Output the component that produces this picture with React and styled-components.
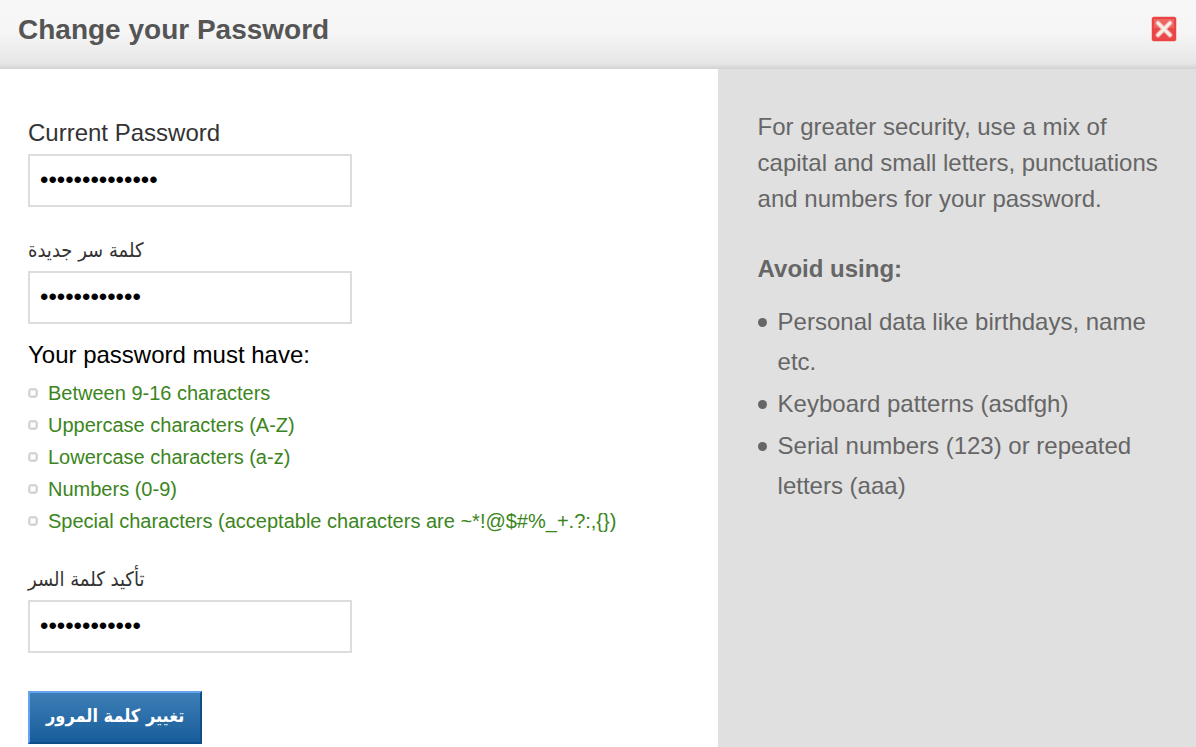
import React, { useState } from "react";
import styled, { createGlobalStyle } from "styled-components";

const RULES = [
    "Between 9-16 characters",
    "Uppercase characters (A-Z)",
    "Lowercase characters (a-z)",
    "Numbers (0-9)",
    "Special characters (acceptable characters are ~*!@$#%_+.?:,{})",
];

const AVOID = [
    "Personal data like birthdays, name etc.",
    "Keyboard patterns (asdfgh)",
    "Serial numbers (123) or repeated letters (aaa)",
];

const App = () => {
    const [formData, setFormData] = useState({
        current: "Password#12345",
        next: "NewPass#2024",
        confirm: "NewPass#2024",
    });

    const handleInputChange = (e) => {
        const { name, value } = e.target;
        setFormData({
            ...formData,
            [name]: value,
        });
    };

    const handleSubmit = (e) => {
        e.preventDefault();
    };

    return (
        <Page>
            <GlobalStyle />
            <Header>
                <Title>Change your Password</Title>
                <CloseButton type="button" aria-label="Close">
                    <CloseIcon />
                </CloseButton>
            </Header>
            <Content>
                <Form onSubmit={handleSubmit}>
                    <Field>
                        <Label htmlFor="current">Current Password</Label>
                        <PasswordInput id="current" name="current" type="password" value={formData.current} onChange={handleInputChange} />
                    </Field>
                    <Field>
                        <Label htmlFor="next" lang="ar" $arabic>كلمة سر جديدة</Label>
                        <PasswordInput id="next" name="next" type="password" value={formData.next} onChange={handleInputChange} />
                    </Field>
                    <RulesTitle>Your password must have:</RulesTitle>
                    <RuleList>
                        {RULES.map((rule) => (
                            <Rule key={rule}>{rule}</Rule>
                        ))}
                    </RuleList>
                    <Field>
                        <Label htmlFor="confirm" lang="ar" $arabic>تأكيد كلمة السر</Label>
                        <PasswordInput id="confirm" name="confirm" type="password" value={formData.confirm} onChange={handleInputChange} />
                    </Field>
                    <SubmitButton type="submit" lang="ar">تغيير كلمة المرور</SubmitButton>
                </Form>
                <Aside>
                    <Tip>
                        For greater security, use a mix of capital and small letters, punctuations and numbers for your password.
                    </Tip>
                    <AvoidTitle>Avoid using:</AvoidTitle>
                    <AvoidList>
                        {AVOID.map((item) => (
                            <AvoidItem key={item}>{item}</AvoidItem>
                        ))}
                    </AvoidList>
                </Aside>
            </Content>
        </Page>
    );
};

export default App;

const CloseIcon = () => (
    <svg width="26" height="26" viewBox="0 0 26 26" aria-hidden="true">
        <rect x="0.5" y="0.5" width="25" height="25" rx="2.5" fill="#f0a09c" />
        <rect x="1" y="1" width="24" height="24" rx="2" fill="#e94343" />
        <rect x="3" y="3" width="20" height="9" fill="#ee6464" />
        <rect x="3" y="12" width="20" height="11" fill="#ea4848" />
        <path d="M7 7 L19 19 M19 7 L7 19" stroke="#f3a5a0" strokeWidth="5" strokeLinecap="round" />
        <path d="M7 7 L19 19 M19 7 L7 19" stroke="#f6efe8" strokeWidth="3" strokeLinecap="round" />
    </svg>
);

const GlobalStyle = createGlobalStyle`
  *, *::before {
    box-sizing: border-box;
  }

  body {
    margin: 0;
    background: #fff;
    font-family: "Liberation Sans", Arial, sans-serif;
  }
`;

const Page = styled.div`
  display: flex;
  flex-direction: column;
  min-height: 100vh;
`;

const Header = styled.header`
  display: flex;
  align-items: flex-start;
  justify-content: space-between;
  padding: 14px 19px 23px 18px;
  background: linear-gradient(#f7f7f7 0, #f6f6f6 45%, #e6e6e6 92%, #d2d2d2 100%);
`;

const Title = styled.h1`
  margin: 0;
  color: #555;
  font-size: 28px;
  line-height: 32px;
`;

const CloseButton = styled.button`
  display: flex;
  margin-top: 2px;
  padding: 0;
  border: 0;
  background: none;
  cursor: pointer;
`;

const Content = styled.main`
  display: grid;
  grid-template-columns: 60% 40%;
  flex: 1;
`;

const Form = styled.form`
  padding: 49px 28px 3px;
`;

const Field = styled.div`
  display: flex;
  flex-direction: column;
  align-items: flex-start;
  gap: 6px;

  & + & {
    margin-top: 28px;
  }
`;

const Label = styled.label`
  color: #333;
  font-family: ${({ $arabic }) => ($arabic ? '"DejaVu Sans Condensed", "DejaVu Sans", sans-serif' : "inherit")};
  font-size: ${({ $arabic }) => ($arabic ? "20px" : "24px")};
  line-height: 30px;
`;

const PasswordInput = styled.input`
  width: 324px;
  max-width: 100%;
  height: 53px;
  padding: 0 10px 2px;
  border: 2px solid #ddd;
  background: #fff;
  color: #000;
  font-family: inherit;
  font-size: 24px;
`;

const RulesTitle = styled.p`
  margin: 16px 0 7px;
  color: #000;
  font-size: 24px;
  line-height: 30px;
`;

const RuleList = styled.ul`
  margin: 0 0 27px;
  padding: 0;
  list-style: none;
`;

const Rule = styled.li`
  display: flex;
  align-items: center;
  gap: 10px;
  color: #3b8520;
  font-size: 20px;
  line-height: 32px;

  &::before {
    content: "";
    flex: none;
    width: 10px;
    height: 10px;
    border: 2px solid #d4d4d4;
    border-radius: 4px;
    background: #fff;
    box-shadow: inset 0 0 1px 1px #e8e8e8;
  }
`;

const SubmitButton = styled.button`
  height: 53px;
  margin-top: 38px;
  padding: 0 16px 4px;
  border: 2px solid;
  border-color: #65a3ee #0f4f88 #0f4f88 #65a3ee;
  background: linear-gradient(#3d7eb6, #185d9b);
  color: #fff;
  font-family: "DejaVu Sans Condensed", "DejaVu Sans", sans-serif;
  font-size: 18px;
  font-weight: bold;
  cursor: pointer;
`;

const Aside = styled.aside`
  padding: 40px 24px 24px 40px;
  background: #e0e0e0;
  color: #666;
  font-size: 24px;
`;

const Tip = styled.p`
  margin: 0;
  line-height: 36px;
`;

const AvoidTitle = styled.h2`
  margin: 34px 0 15px;
  font-size: 24px;
  line-height: 36px;
`;

const AvoidList = styled.ul`
  display: flex;
  flex-direction: column;
  gap: 2px;
  margin: 0;
  padding: 0;
  list-style: none;
`;

const AvoidItem = styled.li`
  display: flex;
  gap: 11px;
  line-height: 40px;

  &::before {
    content: "";
    flex: none;
    width: 9px;
    height: 9px;
    margin-top: 16px;
    border-radius: 50%;
    background: #666;
  }
`;
